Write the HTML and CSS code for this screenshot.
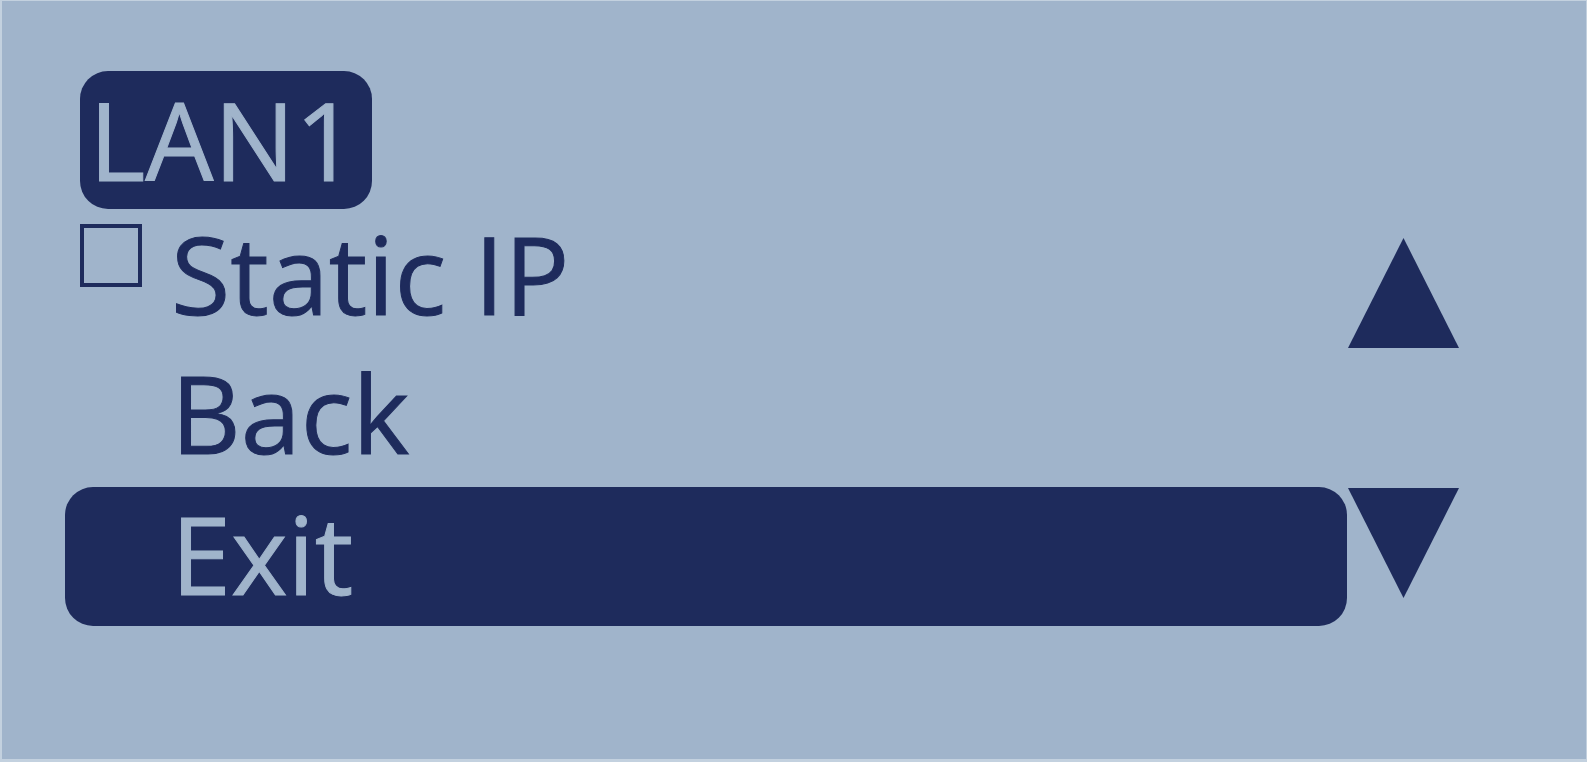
FILE: index.html
```html
<!DOCTYPE html>
<html lang="en">

<head>
  <meta charset="UTF-8">
  <meta name="viewport" content="width=device-width, initial-scale=1.0">
  <title>LAN1</title>
  <link rel="stylesheet" href="styles.css">
</head>

<body>
  <div class="lcd">
    <div class="menu">
      <div class="title">LAN1</div>
      <div class="item">
        <span class="check"></span>
        <span class="label">Static IP</span>
      </div>
      <div class="item">
        <span></span>
        <span class="label">Back</span>
      </div>
      <div class="item active">
        <span></span>
        <span class="label">Exit</span>
      </div>
    </div>

    <div class="arrows">
      <svg class="arrow" width="111" height="110" viewBox="0 0 111 110">
        <polygon points="55.5,0 111,110 0,110" />
      </svg>
      <svg class="arrow" width="111" height="110" viewBox="0 0 111 110">
        <polygon points="0,0 111,0 55.5,110" />
      </svg>
    </div>
  </div>
</body>

</html>
```

FILE: styles.css
```css
* {
  margin: 0;
  padding: 0;
}
body {
  background: #c3d1df;
}
.lcd {
  display: flex;
  height: 762px;
  box-sizing: border-box;
  border-style: solid;
  border-color: #c3d1df;
  border-width: 1px 1px 3px 2px;
  padding: 70px 0 0 63px;
  background: #a0b4cb;
  color: #1e2b5c;
  font-family: "Open Sans", "Noto Sans", sans-serif;
  font-size: 108px;
  -webkit-text-stroke: 1px currentColor;
}
.menu {
  width: 1282px;
}
.title {
  width: 292px;
  height: 138px;
  margin-left: 15px;
  padding-left: 9px;
  box-sizing: border-box;
  border-radius: 28px;
  background: #1e2b5c;
  color: #a0b4cb;
  line-height: 138px;
}
.item {
  display: grid;
  grid-template-columns: 91px 1fr;
  height: 139px;
  padding-left: 15px;
  border-radius: 28px;
}
.item.active {
  background: #1e2b5c;
  color: #a0b4cb;
}
.check {
  width: 62px;
  height: 63px;
  margin-top: 15px;
  box-sizing: border-box;
  border: 4px solid #1e2b5c;
}
.label {
  line-height: 129px;
}
.item.active .label {
  line-height: 134px;
}
/* up / down scroll hints */
.arrows {
  display: flex;
  flex-direction: column;
  gap: 140px;
  margin-left: 1px;
  padding-top: 167px;
}
.arrow {
  display: block;
  fill: #1e2b5c;
}
```
